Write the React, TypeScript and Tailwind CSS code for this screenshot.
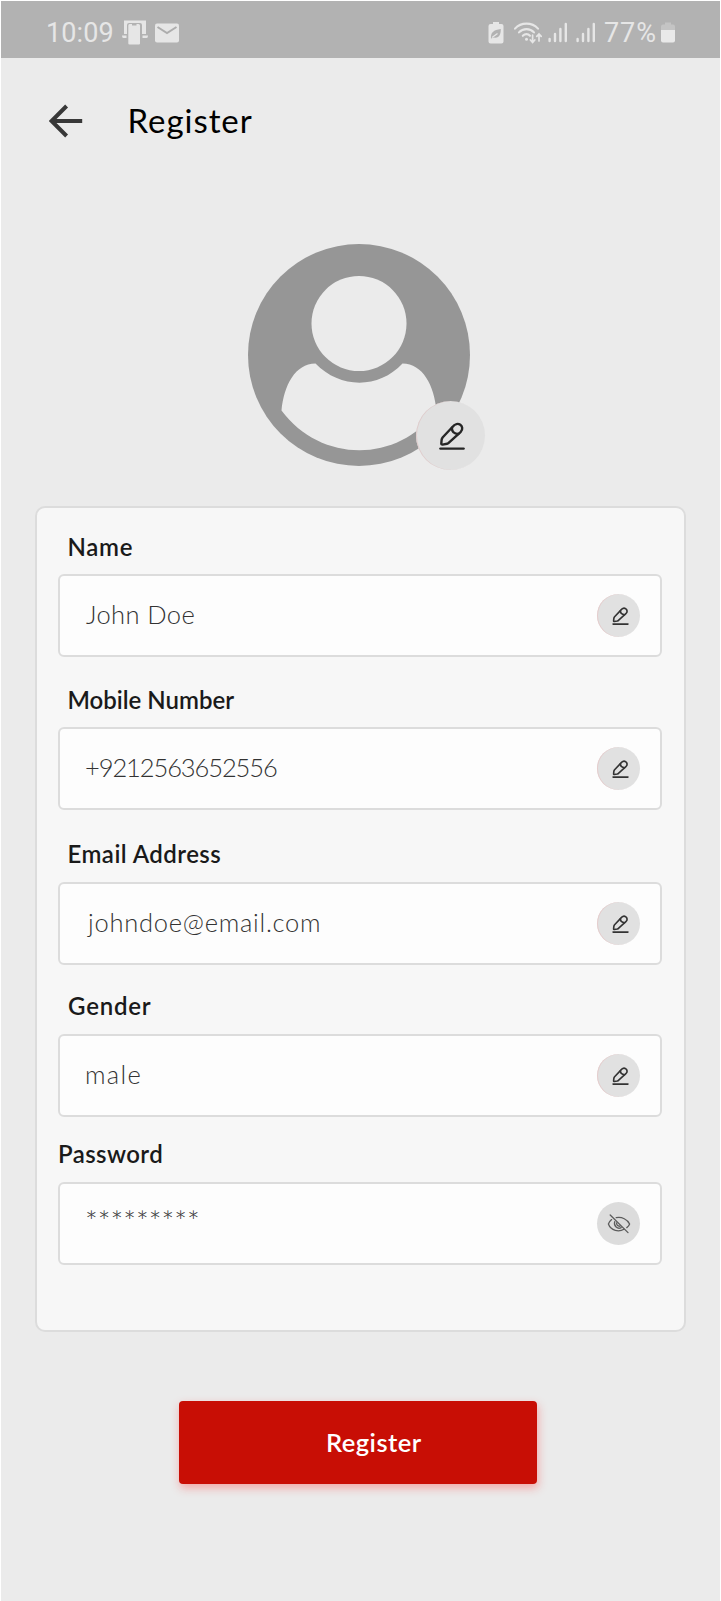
import React from "react";

function PencilIcon({ className, strokeWidth }: { className: string; strokeWidth: number }) {
  return (
    <svg viewBox="0 0 26 28" className={className} fill="none" stroke="currentColor" strokeWidth={strokeWidth} strokeLinecap="round" strokeLinejoin="round">
      <path d="M13.2 5.2 L3.8 15.2 Q2.8 16.4 2.6 18 L2.3 21.6 Q2.3 22.7 3.5 22.6 L8 21.8 Q9.3 21.4 10.2 20.4 L21.8 9.8 C26.4 4.8 18.8 -2.2 13.2 5.2 Z" />
      <path d="M12.9 5.6 C12.8 9.3 15 11.8 19.4 12" />
      <path d="M1.4 26.6 H24.6" />
    </svg>
  );
}

function HiddenEyeIcon() {
  return (
    <svg viewBox="0 0 24 20" className="h-5 w-6 text-[#5c5c5c]" fill="none" stroke="currentColor" strokeWidth="1.3" strokeLinecap="round">
      <path d="M4.6 5.6 C3.2 6.8 2 8.2 1.4 10 C4 17 12 18.2 17 15.2" />
      <path d="M9.2 3.7 C15 2.6 20.4 5.4 22.6 10 C22 11.6 21 12.8 19.8 13.6" />
      <path d="M7.7 7.6 C6.4 12 10.6 15.6 14.2 13.6" />
      <path d="M9.6 9 C9.6 11.4 11 12.4 13 12.2" />
      <path d="M3.2 1 L21 18.6" />
    </svg>
  );
}

function StatusBar() {
  return (
    <div className="flex h-[57px] shrink-0 items-center bg-[#b2b2b2] pt-1.5 pl-[45px] font-[Roboto,sans-serif] text-[27px] leading-none text-[#e6e6e6]">
      <span className="w-[76px] pt-0.5 tracking-[0.1px]">10:09</span>
      <svg viewBox="0 0 26 25" className="h-[25px] w-[26px]" fill="#e6e6e6">
        <path d="M2 0.5 H24 V14 H20 V5 Q20 3 18 3 H7 Q5 3 5 5 V14 H2 Z" />
        <path d="M0 15.5 H4.5 V18 H1.5 Q0 18 0 15.5 Z M20.5 15.5 H26 Q26 18 24.5 18 H20.5 Z" />
        <path d="M7.5 4 H10 V5.5 H14.5 V4 H16.5 Q18 4 18 5.5 V23.5 Q18 24.5 17 24.5 H7.5 Q6.3 24.5 6.3 23.5 V5.5 Q6.3 4 7.5 4 Z" />
      </svg>
      <svg viewBox="0 0 24 20" className="ml-[7px] h-5 w-6">
        <rect x="0" y="0.5" width="24" height="19" rx="2" fill="#e6e6e6" />
        <path d="M2.5 4 L12 10 L21.5 4" fill="none" stroke="#adadad" strokeWidth="2" />
      </svg>
      <svg viewBox="0 0 16 23" className="ml-[309px] h-[23px] w-4">
        <path d="M5 1 H11 V3 H13.5 Q15.5 3 15.5 5 V20.5 Q15.5 22.5 13.5 22.5 H2.5 Q0.5 22.5 0.5 20.5 V5 Q0.5 3 2.5 3 H5 Z" fill="#e6e6e6" />
        <path d="M12.8 8 C12.8 14 11 17.5 6 16.5 L3 17.5 C2.5 11.5 5.5 9 12.8 8 Z" fill="#b2b2b2" />
        <path d="M4 16.5 L9.5 12.5" stroke="#e6e6e6" strokeWidth="1.2" />
      </svg>
      <svg viewBox="0 0 28 22" className="ml-2.5 h-[22px] w-7" fill="none" stroke="#e6e6e6" strokeWidth="2.1" strokeLinecap="round">
        <path d="M1 6.6 C7 0 18 0 24 6.6" />
        <path d="M5 10.4 C9 6 16 6 20 10.4" />
        <path d="M8.8 13.8 C11 11.6 14 11.6 16 13.8" />
        <circle cx="12.5" cy="17.2" r="1.5" fill="#e6e6e6" stroke="none" />
        <path d="M18.6 13 V20 M16.4 18 L18.6 20.4 L20.8 18 M25 19 V12.4 M22.8 14.4 L25 12 L27.2 14.4" strokeWidth="1.7" />
      </svg>
      <svg viewBox="0 0 48 21" className="ml-[6px] h-[21px] w-12" stroke="#e6e6e6" strokeWidth="2.4" strokeLinecap="round">
        <path d="M1.6 17 V19 M7 12 V19 M12.4 7 V19 M17.8 2 V19 M29.6 17 V19 M35 12 V19 M40.4 7 V19 M45.8 2 V19" />
      </svg>
      <span className="ml-[8px] w-[57px] pt-0.5 tracking-[0.9px]">77%</span>
      <svg viewBox="0 0 14 21" className="h-[21px] w-3.5">
        <path d="M4 0.5 H10 V2.5 H12 Q14 2.5 14 4.5 V8 H0 V4.5 Q0 2.5 2 2.5 H4 Z" fill="#c4c4c4" />
        <path d="M0 8 H14 V18.5 Q14 20.5 12 20.5 H2 Q0 20.5 0 18.5 Z" fill="#e9e9e9" />
      </svg>
    </div>
  );
}

type FieldProps = {
  label: string;
  value: string;
  labelClass: string;
  valueClass: string;
  hidden?: boolean;
};

function Field({ label, value, labelClass, valueClass, hidden }: FieldProps) {
  return (
    <div className="flex flex-col">
      <div className={`h-6 text-[24px] leading-6 font-semibold whitespace-nowrap text-[#1a1a1a] ${labelClass}`}>{label}</div>
      <div className="flex h-[83px] items-center justify-between rounded-[6px] border-2 border-[#dcdcdc] bg-[#fdfdfd] pr-5">
        <span className={`leading-8 font-light whitespace-nowrap text-[#333] ${valueClass}`}>{value}</span>
        {hidden ? (
          <span className="flex size-[43px] items-center justify-center rounded-full bg-[#dcdcdc]">
            <HiddenEyeIcon />
          </span>
        ) : (
          <span className="flex size-[43px] items-center justify-center rounded-full bg-[#e1e1e1] pl-[3px] shadow-[inset_1px_0_0_#e5cccc]">
            <PencilIcon className="h-[18px] w-[17px] text-[#333]" strokeWidth={2.5} />
          </span>
        )}
      </div>
    </div>
  );
}

const fields: FieldProps[] = [
  { label: "Name", value: "John Doe", labelClass: "mt-[27px] mb-[15px] pl-[9.5px] tracking-[0.7px]", valueClass: "pb-1 pl-[26px] text-[25.5px] tracking-[0.4px]" },
  { label: "Mobile Number", value: "+9212563652556", labelClass: "mt-[31px] mb-[15px] pl-[9.5px] tracking-[0px]", valueClass: "pb-1 pl-[25px] text-[25.5px] tracking-[-1.1px]" },
  { label: "Email Address", value: "johndoe@email.com", labelClass: "mt-[32px] mb-[16px] pl-[9.5px] tracking-[0.45px]", valueClass: "pb-1 pl-[28px] text-[25.5px] tracking-[0.75px]" },
  { label: "Gender", value: "male", labelClass: "mt-[29px] mb-[16px] pl-[10px] tracking-[0.8px]", valueClass: "pb-1 pl-[25px] text-[25.5px] tracking-[1.3px]" },
  { label: "Password", value: "*********", labelClass: "mt-[25px] mb-[16px] pl-0 tracking-[0.4px]", valueClass: "pb-[7px] pl-[25px] text-[30px] tracking-[0px]", hidden: true },
];

export default function App() {
  return (
    <div className="flex h-[1601px] w-[721px] flex-col border-t border-r border-l border-white bg-[#ebebeb] font-[Lato,sans-serif]">
      <StatusBar />
      <header className="flex h-[127px] shrink-0 items-center pb-px pl-12">
        <svg viewBox="0 0 34 34" className="h-[34px] w-[34px]" fill="none" stroke="#383838" strokeWidth="4">
          <path d="M33.2 17 H3 M17.6 2 L2.6 17 L17.6 32" />
        </svg>
        <h1 className="ml-[44.5px] pb-[2px] text-[33px] leading-10 tracking-[0.95px] whitespace-nowrap text-black">Register</h1>
      </header>
      <div className="relative mt-[59px] ml-[247px] size-[222px] shrink-0">
        <svg viewBox="0 0 222 222" className="size-[222px]">
          <circle cx="111" cy="111" r="111" fill="#969696" />
          <circle cx="111" cy="79.5" r="47.5" fill="#ebebeb" />
          <path d="M33.5 166.5 C36 141 47 120 67.5 119.5 C92 145 131 145 154.5 119.5 C175 120 186 141 188.5 166.5 C150 219.5 73 219.5 33.5 166.5 Z" fill="#ebebeb" />
        </svg>
        <span className="absolute top-[157px] left-[168px] flex size-[69px] items-center justify-center rounded-full bg-[#e1e1e1] pl-[2px] shadow-[inset_1px_0_0_#dfcccc]">
          <PencilIcon className="h-[28px] w-[26px] text-[#262626]" strokeWidth={2.4} />
        </span>
      </div>
      <section className="mt-[40px] ml-[34px] flex h-[826px] w-[651px] shrink-0 flex-col rounded-[10px] border-2 border-[#dcdcdc] bg-[#f7f7f7] pr-[22px] pl-[21px]">
        {fields.map((field) => (
          <Field key={field.label} {...field} />
        ))}
      </section>
      <button className="mt-[69px] ml-[178px] flex h-[83px] w-[358px] shrink-0 items-center rounded-[4px] bg-[#c80e05] pl-[147px] text-[25.5px] font-semibold tracking-[0.45px] whitespace-nowrap text-white shadow-[1px_4px_10px_rgba(255,40,40,0.35)]">
        Register
      </button>
    </div>
  );
}
